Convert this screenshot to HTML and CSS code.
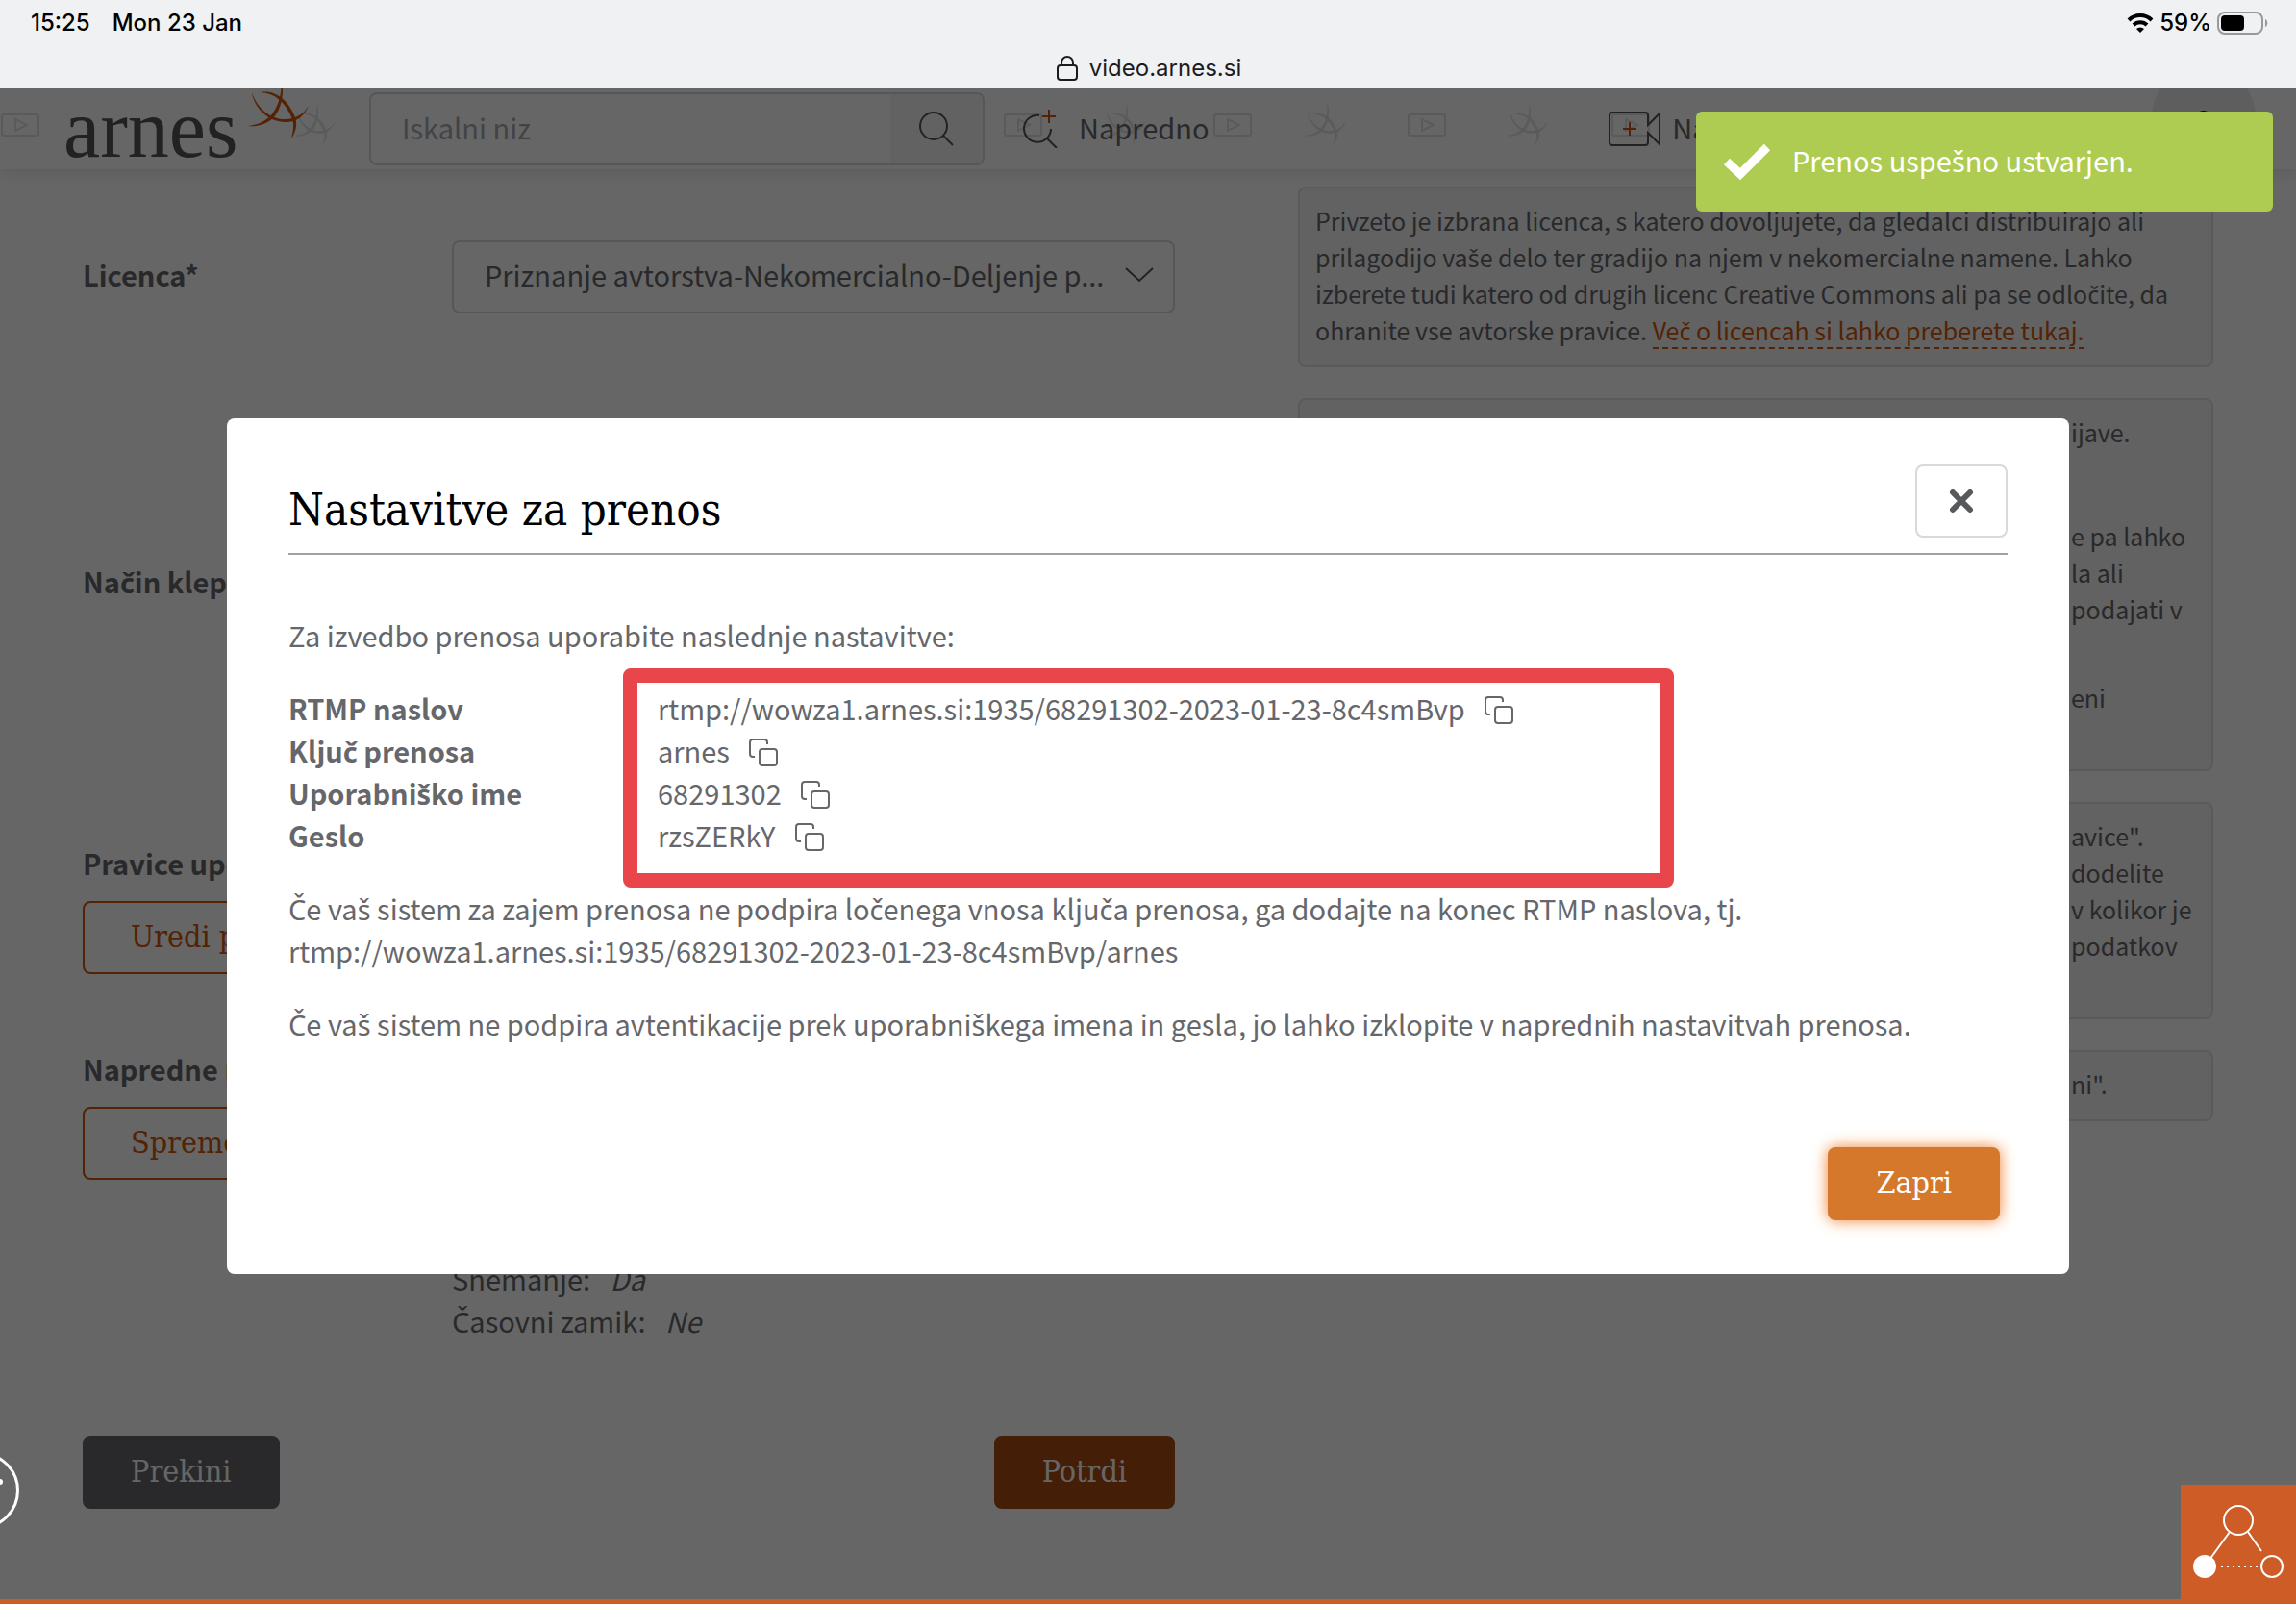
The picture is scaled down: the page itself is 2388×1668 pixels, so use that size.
FILE: index.html
```html
<!DOCTYPE html>
<html lang="sl">
<head>
  <meta charset="UTF-8">
  <meta name="viewport" content="width=device-width, initial-scale=1">
  <title>Arnes Video</title>
  <link rel="stylesheet" href="styles.css">
</head>
<body>

  <!-- shared shapes -->
  <svg class="defs" aria-hidden="true">
    <symbol id="copy" viewBox="0 0 30 30">
      <rect x="11" y="11" width="18" height="17" rx="3"/>
      <path d="M6 19H4a3 3 0 0 1-3-3V4a3 3 0 0 1 3-3h12a3 3 0 0 1 3 3v2"/>
    </symbol>
    <symbol id="mark" viewBox="0 0 68 56" overflow="visible">
      <path d="M6 4C10 18 24 33 42 32c11-1 18-6 23-14-5 11-12 17-24 17C23 35 8 20 6 4z"/>
      <path d="M15 4c15-3 29 8 36 26 3 8 0 16-4 22 2-8 3-14 1-20C41 14 30 5 15 4z"/>
      <path d="M37-10c3 18-1 32-9 41-8 7-18 9-26 8 9-1 16-4 23-10 8-9 12-21 12-39z"/>
    </symbol>
    <symbol id="play" viewBox="0 0 40 24">
      <rect x="1" y="1" width="38" height="22" rx="2"/>
      <path d="M15 6v12l12-6z"/>
    </symbol>
  </svg>

  <div class="status-bar">
    <div class="status-row">
      <span>15:25</span>
      <span>Mon 23 Jan</span>
      <span class="battery">
        <svg width="28" height="22" viewBox="0 0 28 22" fill="none" stroke="#000" stroke-width="4">
          <path d="M2 8a17 17 0 0 1 24 0M7 13a10 10 0 0 1 14 0"/>
          <path d="M14 21l-4-4a6 6 0 0 1 8 0z" fill="#000" stroke="none"/>
        </svg>
        59%
        <svg width="54" height="24" viewBox="0 0 54 24">
          <rect x="1" y="1" width="46" height="22" rx="7" fill="none" stroke="#999" stroke-width="2"/>
          <rect x="4" y="4" width="24" height="16" rx="4"/>
          <path d="M50 8c3 1 3 7 0 8z" fill="#999"/>
        </svg>
      </span>
    </div>
    <div class="address">
      <svg width="22" height="26" viewBox="0 0 22 26" fill="none" stroke="#1c1c1e" stroke-width="2">
        <rect x="1" y="10" width="20" height="15" rx="3"/>
        <path d="M5 10V7a6 6 0 0 1 12 0v3"/>
      </svg>
      video.arnes.si
    </div>
  </div>

  <div class="app">
    <header class="top">
      <svg class="pattern" aria-hidden="true">
        <use href="#play" x="1" y="26" width="40" height="24"/>
        <use class="star" href="#mark" x="306" y="24" width="44" height="36"/>
        <use href="#play" x="1044" y="26" width="40" height="24"/>
        <use class="star" href="#mark" x="1148" y="24" width="44" height="36"/>
        <use href="#play" x="1262" y="26" width="40" height="24"/>
        <use class="star" href="#mark" x="1357" y="24" width="44" height="36"/>
        <use href="#play" x="1464" y="26" width="40" height="24"/>
        <use class="star" href="#mark" x="1567" y="24" width="44" height="36"/>
        <use href="#play" x="1676" y="26" width="40" height="24"/>
      </svg>
      <a class="logo" href="#">arnes<svg class="logo-mark" width="68" height="56"><use href="#mark"/></svg></a>
      <form class="search">
        <input type="text" placeholder="Iskalni niz" aria-label="Iskalni niz">
        <button type="button" aria-label="Išči">
          <svg width="36" height="36" viewBox="0 0 36 36" fill="none" stroke="#55565a" stroke-width="2">
            <circle cx="15" cy="15" r="14"/>
            <path d="M25 25l10 10"/>
          </svg>
        </button>
      </form>
      <a class="nav-item advanced" href="#">
        <svg width="42" height="40" viewBox="0 0 42 40" fill="none" stroke="#55565a" stroke-width="2">
          <path d="M17 6a14 14 0 1 0 12 14M25 30l10 10"/>
          <path d="M27 0v14M20 7h14" stroke="#d2550a"/>
        </svg>
        <span>Napredno</span>
      </a>
      <a class="nav-item upload" href="#">
        <svg width="54" height="36" viewBox="0 0 54 36" fill="none" stroke="#55565a" stroke-width="2">
          <path d="M41 14V4a3 3 0 0 0-3-3H4a3 3 0 0 0-3 3v28a3 3 0 0 0 3 3h34a3 3 0 0 0 3-3V22l12 12V2z"/>
          <path d="M22 11v14M15 18h14" stroke="#d2550a"/>
        </svg>
        <span>Naloži</span>
      </a>
      <div class="avatar">
        <svg width="24" height="40" viewBox="0 0 24 40"><circle cx="12" cy="10" r="9"/></svg>
      </div>
    </header>

    <main class="page">
      <form class="settings">
        <div class="row">
          <label for="licenca">Licenca*</label>
          <div class="select">
            <select id="licenca">
              <option>Priznanje avtorstva-Nekomercialno-Deljenje p...</option>
            </select>
            <svg width="30" height="16" viewBox="0 0 30 16" fill="none" stroke="#55565a" stroke-width="2"><path d="M1 1l14 13L29 1"/></svg>
          </div>
        </div>
        <div class="row row-chat">
          <b>Način klepeta</b>
        </div>
        <div class="row row-rights">
          <div class="row-side">
            <b>Pravice uporabnikov</b>
            <button type="button" class="btn outline">Uredi pravice</button>
          </div>
        </div>
        <div class="row row-advanced">
          <div class="row-side">
            <b>Napredne nastavitve</b>
            <button type="button" class="btn outline">Spremeni</button>
          </div>
          <ul class="summary">
            <li>Snemanje: <i>Da</i></li>
            <li>Časovni zamik: <i>Ne</i></li>
          </ul>
        </div>
        <div class="actions">
          <button type="button" class="btn grey">Prekini</button>
          <button type="button" class="btn dark">Potrdi</button>
        </div>
      </form>

      <aside class="help">
        <div class="note">
          <p>Privzeto je izbrana licenca, s katero dovoljujete, da gledalci distribuirajo ali<br>
          prilagodijo vaše delo ter gradijo na njem v nekomercialne namene. Lahko<br>
          izberete tudi katero od drugih licenc Creative Commons ali pa se odločite, da<br>
          ohranite vse avtorske pravice. <a href="#">Več o licencah si lahko preberete tukaj.</a></p>
        </div>
        <div class="note covered">
          <p>ijave.<br>&nbsp;</p>
          <p>e pa lahko<br>la ali<br>podajati v</p>
          <p class="apart">eni<br>&nbsp;</p>
        </div>
        <div class="note covered">
          <p>avice".<br>dodelite<br>v kolikor je<br>podatkov<br>&nbsp;</p>
        </div>
        <div class="note covered">
          <p>ni".</p>
        </div>
      </aside>
    </main>

    <div class="backdrop">
      <section class="modal" role="dialog" aria-labelledby="modal-title">
        <div class="modal-head">
          <h1 id="modal-title">Nastavitve za prenos</h1>
          <button type="button" class="close" aria-label="Zapri okno">
            <svg width="26" height="26" viewBox="0 0 26 26" fill="none" stroke="#58595b" stroke-width="6" stroke-linecap="round"><path d="M4 4l18 18M22 4L4 22"/></svg>
          </button>
        </div>
        <p class="intro">Za izvedbo prenosa uporabite naslednje nastavitve:</p>
        <dl class="values">
          <dt>RTMP naslov</dt>
          <dd>rtmp://wowza1.arnes.si:1935/68291302-2023-01-23-8c4smBvp <button type="button" aria-label="Kopiraj"><svg class="copy"><use href="#copy"/></svg></button></dd>
          <dt>Ključ prenosa</dt>
          <dd>arnes <button type="button" aria-label="Kopiraj"><svg class="copy"><use href="#copy"/></svg></button></dd>
          <dt>Uporabniško ime</dt>
          <dd>68291302 <button type="button" aria-label="Kopiraj"><svg class="copy"><use href="#copy"/></svg></button></dd>
          <dt>Geslo</dt>
          <dd>rzsZERkY <button type="button" aria-label="Kopiraj"><svg class="copy"><use href="#copy"/></svg></button></dd>
        </dl>
        <p>Če vaš sistem za zajem prenosa ne podpira ločenega vnosa ključa prenosa, ga dodajte na konec RTMP naslova, tj.<br>
        rtmp://wowza1.arnes.si:1935/68291302-2023-01-23-8c4smBvp/arnes</p>
        <p>Če vaš sistem ne podpira avtentikacije prek uporabniškega imena in gesla, jo lahko izklopite v naprednih nastavitvah prenosa.</p>
        <div class="modal-foot">
          <button type="button" class="btn primary">Zapri</button>
        </div>
      </section>
    </div>

    <div class="toast" role="status">
      <svg width="50" height="38" viewBox="0 0 50 38" fill="none" stroke="#fff" stroke-width="9"><path d="M4 19l14 13L46 4"/></svg>
      <span>Prenos uspešno ustvarjen.</span>
    </div>

    <div class="side-handle"><span></span></div>

    <a class="widget" href="#" aria-label="Dostopnost">
      <svg width="100" height="84" viewBox="0 0 100 84" fill="none" stroke="#fff" stroke-width="2">
        <circle cx="50" cy="19" r="15"/>
        <path d="M41 31L20 60M60 31l14 20"/>
        <circle cx="15" cy="67" r="12" fill="#fff" stroke="none"/>
        <circle cx="85" cy="67" r="11"/>
        <path d="M32 67h38" stroke-dasharray="2 4"/>
      </svg>
    </a>
    <div class="bottom-line"></div>
  </div>

  <script src="carons.js"></script>
</body>
</html>
```

FILE: carons.js
```js
// The text font has no č, š, ž, so these letters get a class with their own font
const walker = document.createTreeWalker(document.body, NodeFilter.SHOW_TEXT);
const nodes = [];
while (walker.nextNode()) {
  const parent = walker.currentNode.parentElement;
  if (/[čšž]/i.test(walker.currentNode.data) && parent.tagName !== 'SCRIPT') {
    nodes.push(walker.currentNode);
  }
}

nodes.forEach(node => {
  const parts = node.data.split(/([čšž])/i).map(part => {
    if (!/^[čšž]$/i.test(part)) return part;
    const letter = document.createElement('span');
    letter.className = 'caron';
    letter.textContent = part;
    return letter;
  });
  // keep the pieces together in one inline box
  const text = document.createElement('span');
  text.append(...parts);
  node.replaceWith(text);
});
```

FILE: styles.css
```css
* {
  box-sizing: border-box;
}

body {
  margin: 0;
  min-height: 100vh;
  display: flex;
  flex-direction: column;
  font-family: "Noto Sans CJK SC", "Open Sans", sans-serif;
  font-size: 29px;
  line-height: 44px;
  color: #66676b;
  background: #fff;
}

p, ul, dl, dd, h1 {
  margin: 0;
  padding: 0;
}

a {
  color: inherit;
  text-decoration: none;
}

button, input, select {
  font: inherit;
  color: inherit;
}

/* line-height 1 so the second font does not stretch the line */
.caron {
  font-family: "Noto Sans", sans-serif;
  line-height: 1;
}

.defs {
  position: absolute;
  width: 0;
  height: 0;
}

/* tablet status bar */
.status-bar {
  height: 92px;
  background: #f0f1f3;
  color: #000;
  font-family: Inter, sans-serif;
  font-size: 24px;
  font-weight: 500;
  line-height: 48px;
}

.status-row {
  display: flex;
  gap: 23px;
  padding: 0 28px 0 32px;
}

.battery {
  display: flex;
  align-items: center;
  gap: 6px;
  margin-left: auto;
}

.address {
  display: flex;
  align-items: center;
  justify-content: center;
  gap: 12px;
  padding-left: 2px;
  line-height: 46px;
  font-weight: 400;
  color: #1c1c1e;
}

/* page under the modal */
.app {
  position: relative;
  flex: 1;
  display: flex;
  flex-direction: column;
  overflow: hidden;
}

.top {
  position: relative;
  display: flex;
  align-items: center;
  height: 84px;
  padding: 0 42px 0 66px;
  background: #fff;
  box-shadow: 0 2px 18px rgba(0, 0, 0, 0.12);
}

.pattern {
  position: absolute;
  inset: 0;
  width: 100%;
  height: 100%;
  fill: none;
  stroke: #e2e2e2;
  stroke-width: 2;
}

.pattern .star {
  fill: #e2e2e2;
  stroke-width: 1;
}

.top > :not(.pattern) {
  position: relative;
  flex-shrink: 0;
}

.logo {
  width: 318px;
  font-family: "Liberation Serif", serif;
  font-size: 86px;
  line-height: 76px;
  color: #55565a;
}

.logo-mark {
  position: absolute;
  top: -4px;
  left: 190px;
  fill: #d2550a;
}

.search {
  display: flex;
  width: 640px;
  height: 76px;
  background: #fff;
  border: 2px solid #d9d9d9;
  border-radius: 8px;
  overflow: hidden;
}

.search input {
  flex: 1;
  min-width: 0;
  padding: 0 32px 4px;
  border: 0;
  background: none;
}

.search input::placeholder {
  color: #a9a9ad;
}

.search button {
  display: flex;
  align-items: center;
  justify-content: center;
  width: 96px;
  padding: 0;
  border: 0;
  background: #f5f5f5;
}

.nav-item {
  display: flex;
  align-items: center;
  gap: 16px;
}

.nav-item > span,
.toast > span {
  padding-bottom: 5px;
}

.advanced {
  margin-left: 40px;
}

.upload {
  gap: 12px;
  margin-left: auto;
  margin-right: 414px;
}

.avatar {
  display: flex;
  justify-content: center;
  align-self: flex-start;
  width: 108px;
  height: 108px;
  margin-top: -24px;
  padding-top: 46px;
  border-radius: 50%;
  background: #ececec;
}

.page {
  flex: 1;
  display: grid;
  grid-template-columns: minmax(0, 142fr) minmax(0, 119fr);
  gap: 128px;
  padding: 18px 86px 90px;
}

.settings {
  padding-top: 56px;
}

.row {
  display: flex;
}

.row > label {
  width: 384px;
  line-height: 70px;
  font-weight: bold;
}

.row-side {
  width: 384px;
}

.row-side b {
  display: block;
  margin-bottom: 18px;
  white-space: nowrap;
}

.row-chat {
  margin-top: 256px;
}

.row-rights {
  margin-top: 249px;
}

.row-advanced {
  margin-top: 76px;
}

.select {
  position: relative;
  flex: 1;
}

.select select {
  appearance: none;
  width: 100%;
  height: 76px;
  padding: 0 64px 6px 32px;
  background: #fff;
  border: 2px solid #d9d9d9;
  border-radius: 8px;
}

.select svg {
  position: absolute;
  top: 28px;
  right: 22px;
}

.summary {
  list-style: none;
  padding-top: 218px;
}

.summary i {
  margin-left: 14px;
}

.actions {
  display: flex;
  justify-content: space-between;
  margin-top: 98px;
}

.btn {
  height: 76px;
  padding: 0 48px 2px;
  border: 2px solid transparent;
  border-radius: 8px;
  font-family: "DejaVu Serif Condensed", "DejaVu Serif", serif;
  font-size: 32px;
  color: #fff;
  white-space: nowrap;
}

.outline {
  background: #fff;
  border-color: #d2550a;
  color: #d2550a;
}

.grey {
  background: #66676b;
}

.dark {
  background: #aa4b12;
}

.primary {
  background: #d5782b;
  box-shadow: 0 0 16px #f08030;
}

/* help texts */
.help {
  display: flex;
  flex-direction: column;
  gap: 32px;
}

.note {
  padding: 14px 16px 18px;
  background: #f5f5f5;
  border: 2px solid #e2e2e2;
  border-radius: 8px;
  font-size: 25px;
  line-height: 38px;
  white-space: nowrap;
}

.note a {
  color: #d2550a;
  border-bottom: 2px dashed #d2550a;
}

.note p + p {
  margin-top: 32px;
}

.note p + .apart {
  margin-top: 54px;
}

.covered p {
  width: 130px;
  margin-left: auto;
}

/* modal */
.backdrop {
  position: absolute;
  inset: 0;
  display: flex;
  align-items: center;
  justify-content: center;
  background: rgba(0, 0, 0, 0.6);
}

.modal {
  width: 1916px;
  max-width: 96%;
  padding: 48px 64px 56px;
  background: #fff;
  border-radius: 8px;
}

.modal > p {
  margin-bottom: 32px;
}

.modal-head {
  display: flex;
  justify-content: space-between;
  padding-bottom: 16px;
  border-bottom: 2px solid #a0a1a3;
}

.modal h1 {
  font-family: "DejaVu Serif Condensed", "DejaVu Serif", serif;
  font-size: 47px;
  font-weight: normal;
  line-height: 94px;
  height: 76px;
  color: #000;
}

.close {
  display: flex;
  align-items: center;
  justify-content: center;
  width: 96px;
  height: 76px;
  padding: 0;
  background: #fff;
  border: 2px solid #d9d9d9;
  border-radius: 8px;
}

.modal > .intro {
  margin-top: 61px;
}

.values {
  position: relative;
  display: grid;
  grid-template-columns: 384px 1fr;
  margin-bottom: 32px;
}

/* red frame around the values */
.values::after {
  content: "";
  box-sizing: border-box;
  position: absolute;
  top: -19px;
  bottom: -33px;
  left: 348px;
  width: 1093px;
  border: 15px solid #e8464a;
  border-radius: 8px;
  pointer-events: none;
}

.values dt {
  font-weight: bold;
}

.values dd {
  display: flex;
  align-items: center;
  gap: 20px;
}

.values button {
  display: flex;
  margin-top: 6px;
  padding: 0;
  border: 0;
  background: none;
}

.copy {
  width: 30px;
  height: 30px;
  fill: none;
  stroke: #66676b;
  stroke-width: 2;
}

.modal > p:last-of-type {
  margin-bottom: 0;
}

.modal-foot {
  display: flex;
  justify-content: flex-end;
  margin-top: 107px;
  padding-right: 8px;
}

.toast {
  position: absolute;
  top: 24px;
  right: 24px;
  display: flex;
  align-items: center;
  gap: 22px;
  width: 600px;
  height: 104px;
  padding: 0 28px;
  border-radius: 6px;
  background: #aecb52;
  color: #fff;
}

.side-handle {
  position: absolute;
  left: -60px;
  bottom: 78px;
  display: flex;
  align-items: center;
  justify-content: flex-end;
  width: 80px;
  height: 80px;
  border: 3px solid #fff;
  border-radius: 50%;
}

.side-handle span {
  width: 6px;
  height: 6px;
  margin: 0 14px 18px 0;
  border-radius: 50%;
  background: #fff;
}

.widget {
  position: absolute;
  right: 0;
  bottom: 4px;
  display: flex;
  align-items: center;
  justify-content: center;
  width: 120px;
  height: 120px;
  background: #cd5c26;
}

.bottom-line {
  position: absolute;
  right: 0;
  bottom: 0;
  left: 0;
  height: 5px;
  background: #cd5c26;
}
```
